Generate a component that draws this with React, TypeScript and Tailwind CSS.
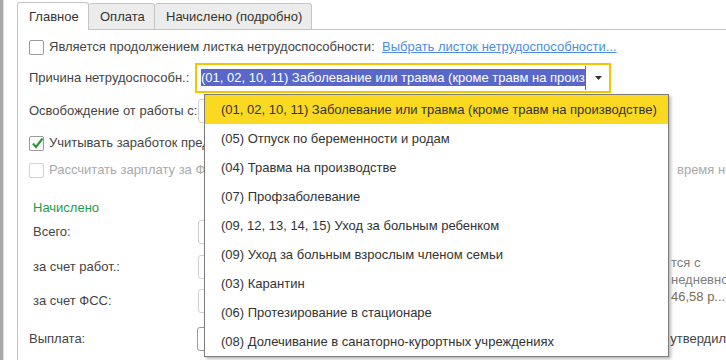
import React from "react";

const items = [
  "(01, 02, 10, 11) Заболевание или травма (кроме травм на производстве)",
  "(05) Отпуск по беременности и родам",
  "(04) Травма на производстве",
  "(07) Профзаболевание",
  "(09, 12, 13, 14, 15) Уход за больным ребенком",
  "(09) Уход за больным взрослым членом семьи",
  "(03) Карантин",
  "(06) Протезирование в стационаре",
  "(08) Долечивание в санаторно-курортных учреждениях",
];

function Checkbox({ checked, disabled }: { checked?: boolean; disabled?: boolean }) {
  return (
    <span
      className={`relative inline-block h-[15px] w-[15px] shrink-0 rounded-[2px] border bg-white ${
        disabled ? "border-[#d2d2d2]" : "border-[#9b9b9b]"
      }`}
    >
      {checked && (
        <svg className="absolute left-[1px] top-[0px]" width="13" height="13" viewBox="0 0 13 13">
          <path d="M2 6.5 L5 10 L11.5 1.5" fill="none" stroke="#2f9a3a" strokeWidth="2.2" />
        </svg>
      )}
    </span>
  );
}

function Field({ dark }: { dark?: boolean }) {
  return (
    <div
      className={`h-[24px] w-[440px] rounded-[3px] border bg-white ${
        dark ? "border-[#9a9a9a]" : "border-[#d0d0d0]"
      }`}
    />
  );
}

export default function App() {
  return (
    <div className="relative flex h-[360px] w-[726px] overflow-hidden bg-white font-['Liberation_Sans',Arial,sans-serif] text-[13px] text-[#444]">
      <div className="w-[3px] bg-[#a9a9a9]" />
      <div className="w-[1px] bg-[#dedede]" />
      <div className="w-[13px]" />

      <div className="flex min-w-0 flex-1 flex-col">
        {/* tabs */}
        <div className="flex h-[30px] items-end pt-[2px]">
          <div className="flex h-[28px] w-[72px] items-center rounded-t-[3px] border border-b-0 border-[#c4c4c4] bg-white pl-[11px] text-[#333]">
            Главное
          </div>
          <div className="flex h-[27px] w-[66px] items-center rounded-t-[3px] border border-l-0 border-[#c4c4c4] bg-[#ececec] pl-[11px] text-[#333]">
            Оплата
          </div>
          <div className="flex h-[27px] w-[157px] items-center rounded-t-[3px] border border-l-0 border-[#c4c4c4] bg-[#ececec] pl-[11px] text-[#333]">
            Начислено (подробно)
          </div>
          <div className="h-[1px] flex-1 bg-[#c4c4c4]" />
        </div>

        {/* body */}
        <div className="flex flex-1 flex-col border-l border-[#c4c4c4] pl-[11px]">
          <div className="mt-[5px] flex h-[24px] items-center whitespace-nowrap">
            <Checkbox />
            <span className="ml-[5px] w-[333px]">Является продолжением листка нетрудоспособности:</span>
            <span className="text-[#4a8de4] underline decoration-[#4a8de4]">Выбрать листок нетрудоспособности...</span>
          </div>

          <div className="mt-[4px] flex h-[30px] items-center whitespace-nowrap">
            <span className="w-[166px]">Причина нетрудоспособн.:</span>
            <div className="flex h-[30px] w-[416px] items-center border-2 border-[#f6c500] bg-white pl-[4px]">
              <div className="w-[384px] overflow-hidden">
                <span className="bg-[#5867c9] py-[1px] text-white">
                  (01, 02, 10, 11) Заболевание или травма (кроме травм на произв
                </span>
              </div>
              <div className="h-[24px] w-[1px] bg-[#6d6d6d]" />
              <svg className="ml-[9px]" width="8" height="4" viewBox="0 0 8 4">
                <path d="M0 0 H7 L3.5 4 Z" fill="#333" />
              </svg>
            </div>
          </div>

          <div className="mt-[6px] flex h-[24px] items-center whitespace-nowrap">
            <span className="w-[169px]">Освобождение от работы с:</span>
            <Field />
          </div>

          <div className="mt-[8px] flex h-[24px] items-center whitespace-nowrap">
            <Checkbox checked />
            <span className="ml-[5px]">Учитывать заработок предыдущих страхователей</span>
          </div>

          <div className="mt-[3px] flex h-[24px] items-center whitespace-nowrap text-[#a9a9a9]">
            <Checkbox disabled />
            <span className="ml-[5px] w-[628px] shrink-0 overflow-hidden">Рассчитать зарплату за ФСС</span>
            <span>время нетрудоспособности</span>
          </div>

          <div className="mt-[17px] flex whitespace-nowrap">
            <div className="flex w-[642px] shrink-0 flex-col pl-[4px]">
              <div className="flex h-[18px] items-center text-[#239b4c]">Начислено</div>
              <div className="mt-[3px] flex h-[24px] items-center">
                <span className="w-[165px]">Всего:</span>
                <Field />
              </div>
              <div className="mt-[11px] flex h-[24px] items-center">
                <span className="w-[165px]">за счет работ.:</span>
                <Field />
              </div>
              <div className="mt-[10px] flex h-[24px] items-center">
                <span className="w-[165px]">за счет ФСС:</span>
                <Field />
              </div>
            </div>
            <div className="flex flex-col pt-[55px] leading-[17px] text-[#808080]">
              <span>тся с</span>
              <span>недневно</span>
              <span className="text-[#7b6c55]">46,58 р...</span>
            </div>
          </div>

          <div className="mt-[14px] flex h-[24px] items-center whitespace-nowrap">
            <span className="w-[169px]">Выплата:</span>
            <div className="w-[473px] shrink-0">
              <Field dark />
            </div>
            <span>утвердил</span>
          </div>
        </div>
      </div>

      {/* dropdown list */}
      <div className="absolute left-[204px] top-[94px] flex w-[465px] flex-col border border-[#7c7c7c] bg-white shadow-[2px_2px_3px_rgba(0,0,0,0.28)]">
        {items.map((t, i) => (
          <div
            key={t}
            className={`flex h-[29px] items-center whitespace-nowrap pl-[16px] text-[#333] ${
              i === 0 ? "bg-[#fbd920]" : ""
            }`}
          >
            {t}
          </div>
        ))}
      </div>
    </div>
  );
}
